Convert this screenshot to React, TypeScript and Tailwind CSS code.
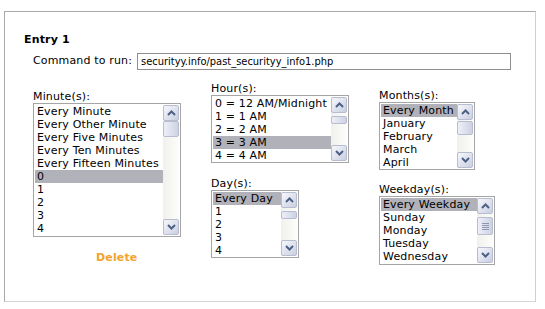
import React from "react";

const Chevron = ({ up }: { up?: boolean }) => (
  <svg width="9" height="6" viewBox="0 0 9 6">
    <path
      d={up ? "M1 5 L4.5 1.5 L8 5" : "M1 1 L4.5 4.5 L8 1"}
      fill="none"
      stroke="#4d6185"
      strokeWidth="2"
    />
  </svg>
);

const Btn = ({ up }: { up?: boolean }) => (
  <div className="h-[16px] w-full rounded-[2px] border border-[#b7bccf] bg-gradient-to-br from-[#f7f8fc] to-[#c9cfe2] flex items-center justify-center">
    <Chevron up={up} />
  </div>
);

const Scrollbar = ({ thumb, grip }: { thumb: string; grip?: boolean }) => (
  <div className="w-[16px] h-full flex flex-col bg-gradient-to-r from-[#f0f0ec] to-[#fdfdfb]">
    <Btn up />
    <div className="flex-1 flex flex-col">
      <div
        className={
          "w-full rounded-[2px] border border-[#b7bccf] bg-gradient-to-r from-[#eef0f8] to-[#cdd2e4] flex flex-col items-center justify-center gap-[1px] " +
          thumb
        }
      >
        {grip && (
          <>
            <div className="w-[7px] h-[1px] bg-[#8e96b0]" />
            <div className="w-[7px] h-[1px] bg-[#8e96b0]" />
            <div className="w-[7px] h-[1px] bg-[#8e96b0]" />
            <div className="w-[7px] h-[1px] bg-[#8e96b0]" />
          </>
        )}
      </div>
    </div>
    <Btn />
  </div>
);

const ListBox = ({
  items,
  selected,
  box,
  thumb,
  grip,
}: {
  items: string[];
  selected: number;
  box: string;
  thumb: string;
  grip?: boolean;
}) => (
  <div className={"border border-[#a5a5a5] bg-white p-[1px] flex " + box}>
    <div className="flex-1 flex flex-col overflow-hidden">
      {items.map((it, i) => (
        <div
          key={i}
          className={
            "h-[13px] leading-[13px] pl-[2px] whitespace-nowrap text-[11px] text-black " +
            (i === selected ? "bg-[#b1b1b9]" : "")
          }
        >
          {it}
        </div>
      ))}
    </div>
    <Scrollbar thumb={thumb} grip={grip} />
  </div>
);

const Label = ({ children }: { children: React.ReactNode }) => (
  <div className="h-[12px] leading-[12px] text-[11px] text-black">{children}</div>
);

export default function App() {
  return (
    <div
      className="w-[545px] h-[309px] bg-white pt-[11px] pl-[4px] tracking-[0.15px]"
      style={{ fontFamily: '"DejaVu Sans", Verdana, sans-serif' }}
    >
      <div className="w-[532px] h-[291px] border border-t-[#a8a8a8] border-l-[#a8a8a8] border-r-[#cfcfcf] border-b-[#d6d6d6]">
        <div className="pt-[21px] pl-[19px] text-[11px] font-bold leading-[13px] text-black">
          Entry 1
        </div>
        <div className="flex items-center mt-[7px] pl-[28px]">
          <span className="text-[11px] text-black">Command to run:</span>
          <div
            className="ml-[5px] w-[374px] h-[17px] border border-[#8f8f8f] bg-white pl-[3px] text-[11px] leading-[15px] tracking-normal text-black"
            style={{ fontFamily: '"DejaVu Sans Condensed", "Liberation Sans", sans-serif' }}
          >
            securityy.info/past_securityy_info1.php
          </div>
        </div>
        <div className="flex items-start pl-[28px] mt-[13px]">
          <div className="w-[178px] flex flex-col mt-[8px]">
            <Label>Minute(s):</Label>
            <ListBox
              box="w-[148px] h-[134px]"
              items={[
                "Every Minute",
                "Every Other Minute",
                "Every Five Minutes",
                "Every Ten Minutes",
                "Every Fifteen Minutes",
                "0",
                "1",
                "2",
                "3",
                "4",
              ]}
              selected={5}
              thumb="mt-0 h-[16px]"
            />
            <div className="mt-[13px] pl-[63px] text-[11px] font-bold text-[#f3a32c]">
              Delete
            </div>
          </div>
          <div className="w-[168px] flex flex-col">
            <Label>Hour(s):</Label>
            <ListBox
              box="w-[138px] h-[68px]"
              items={["0 = 12 AM/Midnight", "1 = 1 AM", "2 = 2 AM", "3 = 3 AM", "4 = 4 AM"]}
              selected={3}
              thumb="mt-[3px] h-[8px]"
            />
            <div className="mt-[15px]">
              <Label>Day(s):</Label>
              <ListBox
                box="w-[88px] h-[68px]"
                items={["Every Day", "1", "2", "3", "4"]}
                selected={0}
                thumb="mt-[3px] h-[8px]"
              />
            </div>
          </div>
          <div className="flex flex-col mt-[7px]">
            <Label>Months(s):</Label>
            <ListBox
              box="w-[96px] h-[68px]"
              items={["Every Month", "January", "February", "March", "April"]}
              selected={0}
              thumb="mt-[1px] h-[14px]"
            />
            <div className="mt-[14px]">
              <Label>Weekday(s):</Label>
              <ListBox
                box="w-[116px] h-[69px]"
                items={["Every Weekday", "Sunday", "Monday", "Tuesday", "Wednesday"]}
                selected={0}
                thumb="mt-[3px] h-[18px]"
                grip
              />
            </div>
          </div>
        </div>
      </div>
    </div>
  );
}
